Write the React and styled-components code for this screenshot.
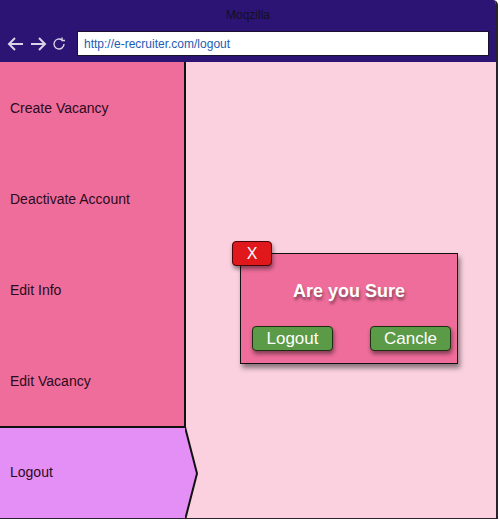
import React from 'react'
import styled, { createGlobalStyle } from 'styled-components'

const GlobalStyle = createGlobalStyle`
  body {
    margin: 0;
    background: #ffffff;
    font-family: "Liberation Sans", Arial, sans-serif;
  }
`

const menu = ['Create Vacancy', 'Deactivate Account', 'Edit Info', 'Edit Vacancy']

const App = () => {
  return (
    <>
      <GlobalStyle />
      <Frame>
        <TopBar>
          <Title>Moqzilla</Title>
          <NavRow>
            <NavIcons>
              <svg width='18' height='16' viewBox='0 0 18 16' fill='none' stroke='#d8d4e6' strokeWidth='2'>
                <path d='M16 8H2M8 2L2 8l6 6' />
              </svg>
              <svg width='18' height='16' viewBox='0 0 18 16' fill='none' stroke='#d8d4e6' strokeWidth='2'>
                <path d='M2 8h14M10 2l6 6-6 6' />
              </svg>
              <svg width='16' height='16' viewBox='0 0 16 16' fill='none' stroke='#d8d4e6' strokeWidth='1.4'>
                <path d='M13 8a5 5 0 1 1-2-4' />
                <path d='M11 1.5v3h3' />
              </svg>
            </NavIcons>
            <Address>http://e-recruiter.com/logout</Address>
          </NavRow>
        </TopBar>
        <Body>
          <Sidebar>
            {menu.map(item => (
              <MenuItem key={item}>{item}</MenuItem>
            ))}
            <ActiveItem>
              Logout
              <Arrow width='14' height='93' viewBox='0 0 14 93'>
                <polygon points='0,0 12,46.5 0,93' fill='#e48ff5' />
                <polyline points='0,0 12,46.5 0,93' fill='none' stroke='#111' strokeWidth='2' />
              </Arrow>
            </ActiveItem>
          </Sidebar>
          <Main>
            <Modal>
              <CloseButton>X</CloseButton>
              <ModalTitle>Are you Sure</ModalTitle>
              <ButtonRow>
                <GreenButton>Logout</GreenButton>
                <GreenButton>Cancle</GreenButton>
              </ButtonRow>
            </Modal>
          </Main>
        </Body>
      </Frame>
    </>
  )
}

const Frame = styled.div`
  width: 498px;
  height: 519px;
  display: flex;
  flex-direction: column;
  background-color: #fbd1df;
  border-right: 2px solid #2a2030;
  border-bottom: 1px solid #2a2030;
  border-top-right-radius: 5px;
  box-sizing: border-box;
  overflow: hidden;
`

const TopBar = styled.header`
  height: 62px;
  background-color: #2b1473;
  display: flex;
  flex-direction: column;
  flex-shrink: 0;
`

const Title = styled.div`
  height: 30px;
  line-height: 30px;
  text-align: center;
  font-size: 12px;
  color: #15101f;
`

const NavRow = styled.div`
  display: flex;
  align-items: center;
  padding: 0 7px 0 7px;
  height: 27px;
`

const NavIcons = styled.div`
  display: flex;
  align-items: center;
  gap: 4px;
  width: 70px;
`

const Address = styled.div`
  flex: 1;
  height: 25px;
  box-sizing: border-box;
  background-color: #ffffff;
  border: 1px solid #1a1030;
  padding-left: 6px;
  display: flex;
  align-items: center;
  font-size: 12px;
  color: #1d5cb4;
`

const Body = styled.div`
  flex: 1;
  display: flex;
`

const Sidebar = styled.nav`
  width: 186px;
  display: flex;
  flex-direction: column;
  flex-shrink: 0;
`

const MenuItem = styled.div`
  height: 91px;
  background-color: #ef6d9a;
  border-right: 2px solid #111;
  display: flex;
  align-items: center;
  padding-left: 10px;
  font-size: 14px;
  color: #2b0b1c;
`

const ActiveItem = styled.div`
  position: relative;
  flex: 1;
  background-color: #e48ff5;
  border-top: 2px solid #111;
  display: flex;
  align-items: center;
  padding-left: 10px;
  padding-bottom: 2px;
  font-size: 14px;
  color: #2b0b1c;
`

const Arrow = styled.svg`
  position: absolute;
  right: -13px;
  top: -1px;
  height: 93px;
`

const Main = styled.main`
  flex: 1;
  padding: 191px 0 0 54px;
`

const Modal = styled.div`
  position: relative;
  width: 218px;
  height: 111px;
  box-sizing: border-box;
  background-color: #ef6d9a;
  border: 1px solid #111;
  box-shadow: 2px 4px 5px rgba(0, 0, 0, 0.45);
  display: flex;
  flex-direction: column;
  align-items: center;
`

const CloseButton = styled.div`
  position: absolute;
  left: -9px;
  top: -13px;
  width: 40px;
  height: 25px;
  box-sizing: border-box;
  background-color: #e0181c;
  border: 1px solid #4a0508;
  border-radius: 4px;
  box-shadow: 1px 3px 4px rgba(0, 0, 0, 0.45);
  color: #ffffff;
  font-size: 16px;
  display: flex;
  align-items: center;
  justify-content: center;
`

const ModalTitle = styled.div`
  margin-top: 27px;
  font-size: 18px;
  font-weight: bold;
  color: #ffffff;
  text-shadow: 1px 3px 3px rgba(0, 0, 0, 0.45);
`

const ButtonRow = styled.div`
  align-self: stretch;
  display: flex;
  justify-content: space-between;
  margin-top: 24px;
  padding: 0 6px 0 11px;
`

const GreenButton = styled.div`
  width: 81px;
  height: 25px;
  box-sizing: border-box;
  background-color: #5b9a46;
  border: 1px solid #1d2e14;
  border-radius: 4px;
  box-shadow: 1px 3px 4px rgba(0, 0, 0, 0.45);
  color: #ffffff;
  font-size: 17px;
  display: flex;
  align-items: center;
  justify-content: center;
`

export default App
